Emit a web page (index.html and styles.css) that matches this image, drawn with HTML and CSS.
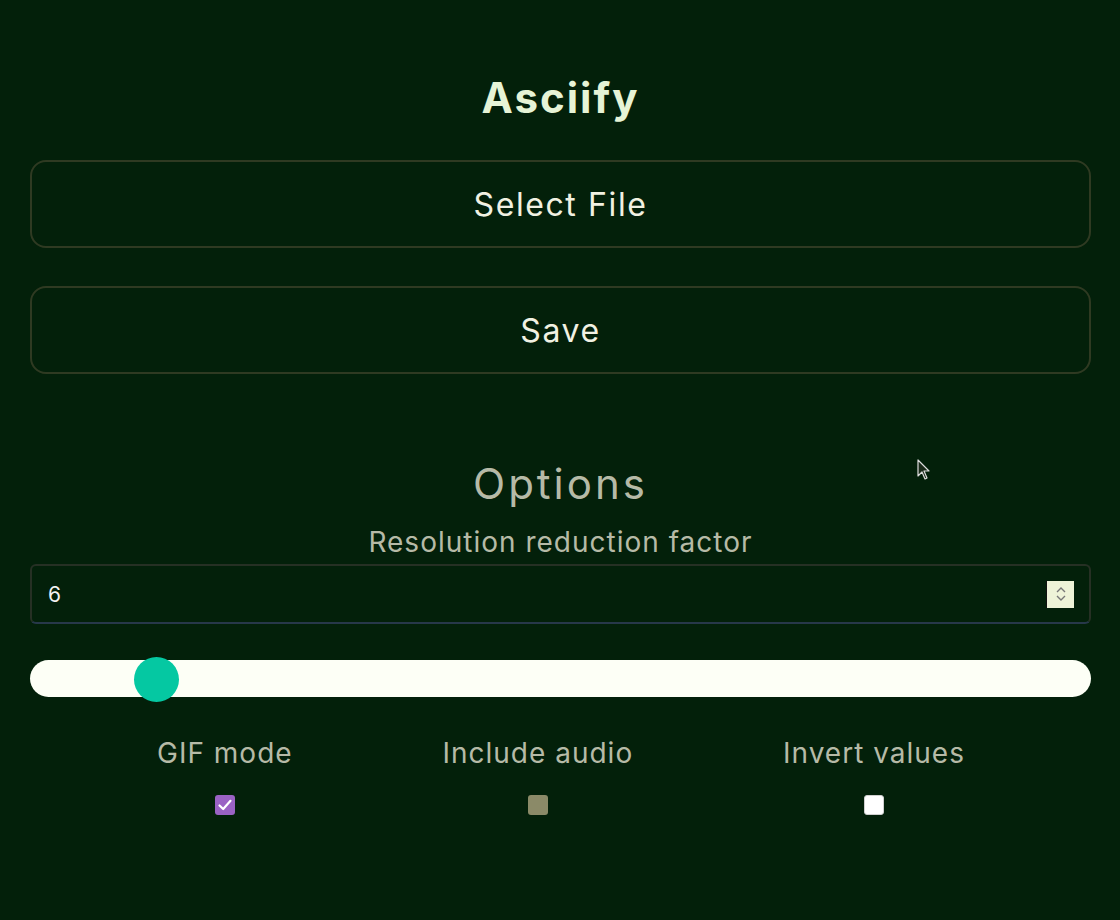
FILE: index.html
```html
<!DOCTYPE html>
<html lang="en">
<head>
<meta charset="utf-8">
<title>Asciify</title>
<link rel="stylesheet" href="styles.css">
</head>
<body>
<main class="app">
  <h1 class="title">Asciify</h1>
  <button class="big-btn">Select File</button>
  <button class="big-btn">Save</button>

  <section class="options">
    <h2 class="options-title">Options</h2>
    <label class="field-label">Resolution reduction factor</label>
    <div class="number-input">
      <span class="number-value">6</span>
      <span class="spin">
        <svg width="14" height="20" viewBox="0 0 14 20"><path d="M3 8 L7 4 L11 8 M3 12 L7 16 L11 12" fill="none" stroke="#777" stroke-width="1.4"/></svg>
      </span>
    </div>
    <div class="slider">
      <div class="slider-thumb"></div>
    </div>
    <div class="checks">
      <div class="check-item">
        <span class="check-label">GIF mode</span>
        <span class="box box-checked">
          <svg width="18" height="18" viewBox="0 0 18 18"><path d="M3.5 9.5 L7.2 13 L14.5 4.8" fill="none" stroke="#fff" stroke-width="2.2" stroke-linecap="round" stroke-linejoin="round"/></svg>
        </span>
      </div>
      <div class="check-item">
        <span class="check-label">Include audio</span>
        <span class="box box-disabled"></span>
      </div>
      <div class="check-item">
        <span class="check-label">Invert values</span>
        <span class="box box-empty"></span>
      </div>
    </div>
  </section>
</main>
<svg class="cursor" width="14" height="22" viewBox="0 0 14 22"><path d="M1 1 L1 17 L5 13 L8 20 L10 19 L7 12 L12 12 Z" fill="#1a2a1a" stroke="#ddd" stroke-width="1.2" stroke-linejoin="round"/></svg>
</body>
</html>
```
FILE: styles.css
```css
html, body {
  margin: 0;
  padding: 0;
}
body {
  background: #03200a;
  width: 1120px;
  height: 920px;
  overflow: hidden;
  font-family: "Inter", "Noto Sans", sans-serif;
  position: relative;
}
.app {
  padding: 0 29px 0 30px;
  display: flex;
  flex-direction: column;
}
.title {
  margin: 70px 0 0;
  height: 56px;
  line-height: 56px;
  text-align: center;
  font-size: 42px;
  font-weight: 700;
  color: #e6f3d6;
  letter-spacing: 2px;
}
.big-btn {
  margin-top: 34px;
  height: 88px;
  background: transparent;
  border: 2px solid #2f3a22;
  border-radius: 16px;
  color: #f1f1e2;
  font-family: inherit;
  font-size: 32px;
  font-weight: 400;
  letter-spacing: 1.6px;
  padding: 0;
}
.big-btn + .big-btn {
  margin-top: 38px;
}
.options {
  display: flex;
  flex-direction: column;
  margin-top: 78px;
}
.options-title {
  margin: 0;
  text-align: center;
  font-size: 42px;
  font-weight: 400;
  line-height: 64px;
  letter-spacing: 3px;
  color: #b6baa7;
}
.field-label {
  text-align: center;
  font-size: 28px;
  line-height: 36px;
  letter-spacing: 1px;
  color: #b6baa7;
  margin-top: 8px;
}
.number-input {
  margin-top: 4px;
  height: 60px;
  box-sizing: border-box;
  border: 2px solid #263024;
  border-bottom-color: #27384a;
  border-radius: 6px;
  display: flex;
  align-items: center;
  justify-content: space-between;
  padding: 0 15px 0 16px;
}
.number-value {
  color: #f2f2f2;
  font-size: 21px;
}
.spin {
  width: 28px;
  height: 27px;
  background: #eef3d8;
  border-left: 1px solid #111;
  box-sizing: border-box;
  display: flex;
  align-items: center;
  justify-content: center;
}
.slider {
  margin-top: 36px;
  height: 37px;
  border-radius: 19px;
  background: #fdfff6;
  position: relative;
}
.slider-thumb {
  position: absolute;
  left: 104px;
  top: -3px;
  width: 45px;
  height: 45px;
  border-radius: 50%;
  background: #05c8a2;
}
.checks {
  margin-top: 39px;
  display: flex;
  justify-content: space-between;
  padding: 0 126px 0 127px;
}
.check-item {
  display: flex;
  flex-direction: column;
  align-items: center;
  gap: 25px;
}
.check-label {
  font-size: 28px;
  line-height: 34px;
  letter-spacing: 1px;
  color: #b6baa7;
}
.box {
  width: 20px;
  height: 20px;
  border-radius: 3px;
  box-sizing: border-box;
  display: flex;
  align-items: center;
  justify-content: center;
}
.box-checked {
  background: #9a62c4;
}
.box-disabled {
  background: #8b8a68;
}
.box-empty {
  background: #ffffff;
  border: 1px solid #cfcfcf;
}
.cursor {
  position: absolute;
  left: 917px;
  top: 459px;
}
```
